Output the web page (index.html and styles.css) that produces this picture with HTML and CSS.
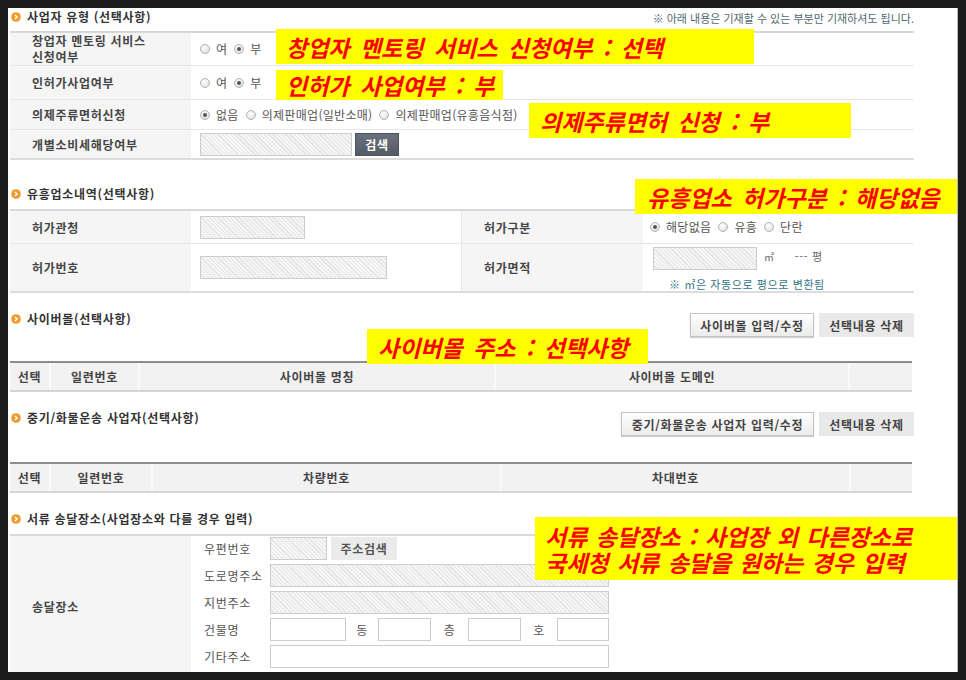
FILE: index.html
```html
<!DOCTYPE html>
<html lang="ko">
<head>
<meta charset="utf-8">
<title>사업자 등록 신청</title>
<link rel="stylesheet" href="styles.css">
</head>
<body>
<div class="panel">

  <section class="sec">
    <div class="head head-first">
      <h2 class="title"><svg class="bullet" viewBox="0 0 10 10"><circle cx="5" cy="5" r="4.8" fill="#ef9a2e"/><circle cx="5" cy="5" r="4.8" fill="none" stroke="#f7c47a" stroke-width="0.6"/><path d="M4 2.9 L6.1 5 L4 7.1" fill="none" stroke="#fff" stroke-width="1.4"/></svg>사업자 유형 (선택사항)</h2>
      <p class="note">※ 아래 내용은 기재할 수 있는 부분만 기재하셔도 됩니다.</p>
    </div>
    <div class="form form-type">
      <div class="lbl h35 two">창업자 멘토링 서비스<br>신청여부</div>
      <div class="val h35">
        <label class="opt"><span class="radio"></span>여</label>
        <label class="opt"><span class="radio on"></span>부</label>
      </div>
      <div class="lbl h34">인허가사업여부</div>
      <div class="val h34">
        <label class="opt"><span class="radio"></span>여</label>
        <label class="opt"><span class="radio on"></span>부</label>
      </div>
      <div class="lbl h30">의제주류면허신청</div>
      <div class="val h30">
        <label class="opt"><span class="radio on"></span>없음</label>
        <label class="opt"><span class="radio"></span>의제판매업(일반소매)</label>
        <label class="opt"><span class="radio"></span>의제판매업(유흥음식점)</label>
      </div>
      <div class="lbl h30 last">개별소비세해당여부</div>
      <div class="val h30 last">
        <span class="field hatch w152"></span>
        <button class="btn-dark">검색</button>
      </div>
    </div>
  </section>

  <section class="sec">
    <div class="head head-mid">
      <h2 class="title"><svg class="bullet" viewBox="0 0 10 10"><circle cx="5" cy="5" r="4.8" fill="#ef9a2e"/><circle cx="5" cy="5" r="4.8" fill="none" stroke="#f7c47a" stroke-width="0.6"/><path d="M4 2.9 L6.1 5 L4 7.1" fill="none" stroke="#fff" stroke-width="1.4"/></svg>유흥업소내역(선택사항)</h2>
    </div>
    <div class="form form-ent">
      <div class="lbl h35">허가관청</div>
      <div class="val h35 sep"><span class="field hatch w105"></span></div>
      <div class="lbl h35">허가구분</div>
      <div class="val h35 pad7">
        <label class="opt"><span class="radio on"></span>해당없음</label>
        <label class="opt"><span class="radio"></span>유흥</label>
        <label class="opt"><span class="radio"></span>단란</label>
      </div>
      <div class="lbl h49 last">허가번호</div>
      <div class="val h49 last sep"><span class="field hatch w187"></span></div>
      <div class="lbl h49 last">허가면적</div>
      <div class="val h49 last area">
        <div class="area-line">
          <span class="field hatch w104"></span>
          <span class="unit">㎡</span>
          <span class="pyeong">--- 평</span>
        </div>
        <p class="area-note">※ ㎡은 자동으로 평으로 변환됨</p>
      </div>
    </div>
  </section>

  <section class="sec">
    <div class="head head-btns">
      <h2 class="title"><svg class="bullet" viewBox="0 0 10 10"><circle cx="5" cy="5" r="4.8" fill="#ef9a2e"/><circle cx="5" cy="5" r="4.8" fill="none" stroke="#f7c47a" stroke-width="0.6"/><path d="M4 2.9 L6.1 5 L4 7.1" fill="none" stroke="#fff" stroke-width="1.4"/></svg>사이버몰(선택사항)</h2>
      <div class="btns">
        <button class="btn w124">사이버몰 입력/수정</button>
        <button class="btn flat">선택내용 삭제</button>
      </div>
    </div>
    <div class="thead thead-mall">
      <div>선택</div><div>일련번호</div><div>사이버몰 명칭</div><div>사이버몰 도메인</div><div></div>
    </div>
  </section>

  <section class="sec">
    <div class="head head-btns head-truck">
      <h2 class="title"><svg class="bullet" viewBox="0 0 10 10"><circle cx="5" cy="5" r="4.8" fill="#ef9a2e"/><circle cx="5" cy="5" r="4.8" fill="none" stroke="#f7c47a" stroke-width="0.6"/><path d="M4 2.9 L6.1 5 L4 7.1" fill="none" stroke="#fff" stroke-width="1.4"/></svg>중기/화물운송 사업자(선택사항)</h2>
      <div class="btns">
        <button class="btn w193">중기/화물운송 사업자 입력/수정</button>
        <button class="btn flat">선택내용 삭제</button>
      </div>
    </div>
    <div class="thead thead-truck">
      <div>선택</div><div>일련번호</div><div>차량번호</div><div>차대번호</div><div></div>
    </div>
  </section>

  <section class="sec">
    <div class="head head-addr">
      <h2 class="title"><svg class="bullet" viewBox="0 0 10 10"><circle cx="5" cy="5" r="4.8" fill="#ef9a2e"/><circle cx="5" cy="5" r="4.8" fill="none" stroke="#f7c47a" stroke-width="0.6"/><path d="M4 2.9 L6.1 5 L4 7.1" fill="none" stroke="#fff" stroke-width="1.4"/></svg>서류 송달장소(사업장소와 다를 경우 입력)</h2>
    </div>
    <div class="form form-addr">
      <div class="lbl addr-lbl">송달장소</div>
      <div class="addr">
        <span class="sub">우편번호</span>
        <div class="addr-row"><span class="field hatch w57"></span><button class="btn-gray">주소검색</button></div>
        <span class="sub">도로명주소</span>
        <div class="addr-row"><span class="field hatch w339"></span></div>
        <span class="sub">지번주소</span>
        <div class="addr-row"><span class="field hatch w339"></span></div>
        <span class="sub">건물명</span>
        <div class="addr-row">
          <span class="field w76"></span><span class="mini w32">동</span>
          <span class="field w53"></span><span class="mini w37">층</span>
          <span class="field w53"></span><span class="mini w36">호</span>
          <span class="field w52"></span>
        </div>
        <span class="sub">기타주소</span>
        <div class="addr-row"><span class="field w339"></span></div>
      </div>
    </div>
  </section>

  <div class="callout c1">창업자 멘토링 서비스 신청여부 : 선택</div>
  <div class="callout c2">인허가 사업여부 : 부</div>
  <div class="callout c3">의제주류면허 신청 : 부</div>
  <div class="callout c4">유흥업소 허가구분 : 해당없음</div>
  <div class="callout c5">사이버몰 주소 : 선택사항</div>
  <div class="callout c6"><span>서류 송달장소 : 사업장 외 다른장소로</span><span>국세청 서류 송달을 원하는 경우 입력</span></div>
</div>
</body>
</html>
```

FILE: styles.css
```css
html {
  background: #1b1b1b;
}

body {
  margin: 8px;
  background: #1b1b1b;
  font-family: "Noto Sans CJK KR", "Noto Sans", sans-serif;
  font-size: 12px;
  letter-spacing: 0.7px;
  color: #444;
}

.panel {
  position: relative;
  box-sizing: border-box;
  width: 950px;
  height: 664px;
  overflow: hidden;
  background: #fff;
  border-right: 1px solid #b8b8b8;
  padding-left: 2px;
}

.sec {
  width: 904px;
}

/* ---------- section heads ---------- */
.head {
  display: flex;
  justify-content: space-between;
  align-items: center;
  height: 14px;
}

.head-first { margin-top: 2px; }
.head-mid { margin-top: 27px; }
.head-addr { margin-top: 19px; }

.head-btns {
  height: 24px;
  margin-top: 20px;
  align-items: flex-start;
}

.head-btns .title {
  margin-top: -1px;
}

.title {
  display: flex;
  align-items: center;
  gap: 6px;
  margin: 0;
  height: 14px;
  font-size: 12px;
  line-height: 14px;
  font-weight: 700;
  color: #333;
}

.bullet {
  width: 10px;
  height: 10px;
  margin-left: 1px;
}

.note {
  margin: 0;
  font-size: 11px;
  line-height: 14px;
  color: #4f6870;
  letter-spacing: 0;
  padding-top: 2px;
}

/* ---------- form grids ---------- */
.form {
  display: grid;
  border-top: 2px solid #d9d9d9;
}

.form-type {
  margin-top: 7px;
  grid-template-columns: 181px 723px;
}

.form-ent {
  margin-top: 8px;
  grid-template-columns: 181px 271px 181px 271px;
}

.form-addr {
  margin-top: 8px;
  grid-template-columns: 181px 723px;
}

.lbl,
.val {
  box-sizing: border-box;
  display: flex;
  align-items: center;
  border-bottom: 1px solid #e6e6e6;
}

.lbl {
  background: #f5f5f5;
  padding-left: 22px;
  font-weight: 700;
  color: #454545;
  line-height: 15px;
}

.lbl.two {
  line-height: 16px;
}

.val {
  padding-left: 9px;
  color: #555;
}

.val.sep {
  border-right: 1px solid #e6e6e6;
}

.val.pad7 {
  padding-left: 7px;
}

.h35 { height: 33px; }
.h34 { height: 34px; }
.h30 { height: 30px; }
.h49 { height: 49px; }

.lbl.last,
.val.last {
  border-bottom: 2px solid #dcdcdc;
}

/* ---------- radio options ---------- */
.opt {
  display: inline-flex;
  align-items: center;
  gap: 6px;
  margin-right: 7px;
  line-height: 14px;
  letter-spacing: 0.3px;
  color: #555;
}

.radio {
  box-sizing: border-box;
  width: 10px;
  height: 10px;
  border-radius: 50%;
  border: 1px solid #b4b4b4;
  background: radial-gradient(circle at 40% 35%, #ffffff, #d9d9d9);
}

.radio.on::after {
  content: "";
  display: block;
  width: 4px;
  height: 4px;
  margin: 2px;
  border-radius: 50%;
  background: #555;
}

/* ---------- inputs & buttons ---------- */
.field {
  box-sizing: border-box;
  display: inline-block;
  height: 23px;
  border: 1px solid #cdcdcd;
  background: #fff;
}

.hatch {
  background: repeating-linear-gradient(45deg, #f5f5f5 0 2px, #e4e4e4 2px 3px);
}

.w52 { width: 52px; }
.w53 { width: 53px; }
.w57 { width: 57px; }
.w76 { width: 76px; }
.w104 { width: 104px; }
.w105 { width: 105px; }
.w152 { width: 152px; }
.w187 { width: 187px; }
.w339 { width: 339px; }

.btn-dark {
  margin-left: 3px;
  width: 44px;
  height: 23px;
  border: 1px solid #4c525e;
  background: linear-gradient(#6a707c, #545a66);
  color: #fff;
  font-family: inherit;
  font-size: 12px;
  letter-spacing: 0.7px;
  font-weight: 700;
  padding: 0;
}

.btn-gray {
  margin-left: 4px;
  width: 66px;
  height: 23px;
  border: none;
  background: #ebebeb;
  color: #555;
  font-family: inherit;
  font-size: 12px;
  letter-spacing: 0.7px;
  font-weight: 700;
  padding: 0;
}

.btns {
  display: flex;
  gap: 5px;
}

.btn {
  box-sizing: border-box;
  height: 24px;
  padding: 0;
  border: 1px solid #c3c3c3;
  background: linear-gradient(#fefefe, #ececec);
  box-shadow: 0 1px 1px rgba(0, 0, 0, 0.18);
  font-family: inherit;
  font-size: 12px;
  letter-spacing: 0.7px;
  font-weight: 700;
  color: #444;
}

.btn.w124 { width: 124px; }
.btn.w193 { width: 193px; }

.btn.flat {
  width: 95px;
  border-color: #e9e9e9;
  background: #e9e9e9;
  box-shadow: none;
}

/* ---------- area cell ---------- */
.area {
  flex-direction: column;
  align-items: flex-start;
  justify-content: flex-start;
  padding-left: 10px;
  padding-top: 3px;
}

.area-line {
  display: flex;
  align-items: flex-start;
  height: 24px;
}

.unit {
  margin-left: 7px;
  margin-top: 4px;
  font-size: 10px;
  line-height: 12px;
  color: #666;
}

.pyeong {
  margin-left: 20px;
  margin-top: 3px;
  font-size: 11px;
  line-height: 13px;
  color: #666;
}

.area-note {
  margin: 6px 0 0 16px;
  font-size: 11px;
  line-height: 14px;
  color: #2f7486;
  letter-spacing: 0.6px;
}

/* ---------- list table heads ---------- */
.thead {
  display: grid;
  box-sizing: border-box;
  width: 902px;
  height: 31px;
  border-top: 2px solid #8d8d8d;
  border-bottom: 2px solid #d6d6d6;
  background: #f2f2f2;
}

.thead-mall {
  margin-top: 24px;
  grid-template-columns: 41px 89px 356px 354px 1fr;
}

.thead-truck {
  margin-top: 26px;
  grid-template-columns: 41px 102px 349px 349px 1fr;
}

.thead > div {
  display: flex;
  align-items: center;
  justify-content: center;
  border-right: 2px solid #fafafa;
  font-weight: 700;
  color: #444;
}

.thead > div:last-child {
  border-right: none;
}

/* ---------- address ---------- */
.addr-lbl {
  border-bottom: none;
  height: 140px;
}

.addr {
  display: grid;
  grid-template-columns: 66px 1fr;
  grid-auto-rows: 23px;
  row-gap: 4px;
  padding: 1px 0 0 13px;
}

.sub {
  display: flex;
  align-items: center;
  color: #555;
}

.addr-row {
  display: flex;
  align-items: center;
}

.mini {
  text-align: center;
  color: #555;
}

.w32 { width: 32px; }
.w36 { width: 36px; }
.w37 { width: 37px; }

/* ---------- yellow callouts ---------- */
.callout {
  position: absolute;
  box-sizing: border-box;
  display: flex;
  align-items: center;
  padding-left: 10px;
  background: #ffff00;
  color: #ff0000;
  font-size: 23px;
  line-height: 28px;
  letter-spacing: 0;
  font-weight: 700;
  font-style: italic;
  word-spacing: 4px;
  white-space: nowrap;
}

.c1 { left: 268px; top: 21px; width: 478px; height: 35px; }
.c2 { left: 268px; top: 62px; width: 227px; height: 30px; }
.c3 { left: 521px; top: 95px; width: 322px; height: 35px; padding-left: 11px; }
.c4 { left: 627px; top: 171px; width: 323px; height: 35px; padding-left: 12px; }
.c5 { left: 359px; top: 321px; width: 281px; height: 35px; padding-left: 11px; }
.c6 {
  left: 527px;
  top: 509px;
  width: 423px;
  height: 63px;
  padding-left: 10px;
  flex-direction: column;
  align-items: flex-start;
  justify-content: center;
  word-spacing: 2px;
}

.c6 span {
  display: block;
  height: 26px;
  line-height: 26px;
}
```
